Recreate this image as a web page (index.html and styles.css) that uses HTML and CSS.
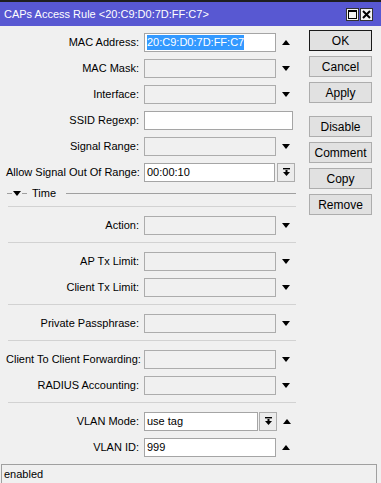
FILE: index.html
```html
<!DOCTYPE html>
<html>
<head>
	<meta charset="UTF-8">
	<title>CAPs Access Rule</title>
	<link rel="stylesheet" href="styles.css">
</head>
<body>
	<div class="window">
		<div class="titlebar">
			<span class="title">CAPs Access Rule &lt;20:C9:D0:7D:FF:C7&gt;</span>
			<span class="tbtn"><svg width="11" height="11" viewBox="0 0 11 11"><rect x="1.5" y="1.5" width="8" height="8" fill="none" stroke="#000" stroke-width="1"/><rect x="1.5" y="1.5" width="8" height="1.5" fill="#000"/></svg></span>
			<span class="tbtn"><svg width="11" height="11" viewBox="0 0 11 11"><path d="M2 2 L9 9 M9 2 L2 9" stroke="#000" stroke-width="2"/></svg></span>
		</div>
		<div class="content">
			<div class="form">
				<div class="row">
					<span class="lbl">MAC Address:</span>
					<span class="field edit"><span class="sel">20:C9:D0:7D:FF:C7</span></span>
					<span class="slot"><span class="tri-up"></span></span>
				</div>
				<div class="row">
					<span class="lbl">MAC Mask:</span>
					<span class="field"></span>
					<span class="slot"><span class="tri-down"></span></span>
				</div>
				<div class="row">
					<span class="lbl">Interface:</span>
					<span class="field"></span>
					<span class="slot"><span class="tri-down"></span></span>
				</div>
				<div class="row">
					<span class="lbl">SSID Regexp:</span>
					<span class="field edit wide"></span>
				</div>
				<div class="row">
					<span class="lbl">Signal Range:</span>
					<span class="field"></span>
					<span class="slot"><span class="tri-down"></span></span>
				</div>
				<div class="row">
					<span class="lbl">Allow Signal Out Of Range:</span>
					<span class="field edit mid">00:00:10</span>
					<span class="dbtn"><svg width="7" height="8" viewBox="0 0 7 8"><rect x="0" y="0" width="7" height="1.4" fill="#000"/><rect x="2.5" y="2" width="2" height="2" fill="#000"/><path d="M0 4 L7 4 L3.5 8 Z" fill="#000"/></svg></span>
				</div>

				<div class="section">
					<span class="dash"></span><span class="tri-down small"></span><span class="dash"></span>
					<span class="sec-title">Time</span>
					<span class="sec-line"></span>
				</div>
				<div class="sep"></div>

				<div class="row">
					<span class="lbl">Action:</span>
					<span class="field"></span>
					<span class="slot"><span class="tri-down"></span></span>
				</div>
				<div class="sep"></div>

				<div class="row">
					<span class="lbl">AP Tx Limit:</span>
					<span class="field"></span>
					<span class="slot"><span class="tri-down"></span></span>
				</div>
				<div class="row">
					<span class="lbl">Client Tx Limit:</span>
					<span class="field"></span>
					<span class="slot"><span class="tri-down"></span></span>
				</div>
				<div class="sep"></div>

				<div class="row">
					<span class="lbl">Private Passphrase:</span>
					<span class="field"></span>
					<span class="slot"><span class="tri-down"></span></span>
				</div>
				<div class="sep"></div>

				<div class="row">
					<span class="lbl">Client To Client Forwarding:</span>
					<span class="field"></span>
					<span class="slot"><span class="tri-down"></span></span>
				</div>
				<div class="row">
					<span class="lbl">RADIUS Accounting:</span>
					<span class="field"></span>
					<span class="slot"><span class="tri-down"></span></span>
				</div>
				<div class="sep"></div>

				<div class="row">
					<span class="lbl">VLAN Mode:</span>
					<span class="field edit short">use tag</span>
					<span class="dbtn tight"><svg width="7" height="8" viewBox="0 0 7 8"><rect x="0" y="0" width="7" height="1.4" fill="#000"/><rect x="2.5" y="2" width="2" height="2" fill="#000"/><path d="M0 4 L7 4 L3.5 8 Z" fill="#000"/></svg></span>
					<span class="slot"><span class="tri-up"></span></span>
				</div>
				<div class="row">
					<span class="lbl">VLAN ID:</span>
					<span class="field edit">999</span>
					<span class="slot"><span class="tri-up"></span></span>
				</div>
			</div>

			<div class="actions">
				<span class="btn default">OK</span>
				<span class="btn">Cancel</span>
				<span class="btn">Apply</span>
				<span class="btn gap">Disable</span>
				<span class="btn">Comment</span>
				<span class="btn">Copy</span>
				<span class="btn">Remove</span>
			</div>
		</div>
		<div class="status">enabled</div>
	</div>
</body>
</html>
```

FILE: styles.css
```css
body {
	margin: 0;
	background: #f0f0f0;
	font-family: "Liberation Sans", Arial, sans-serif;
	font-size: 11px;
	color: #000;
}
.window {
	width: 381px;
	height: 483px;
	overflow: hidden;
	display: flex;
	flex-direction: column;
}
.titlebar {
	height: 25px;
	border-top: 2px solid #1e1e1e;
	background: #5858d2;
	display: flex;
	align-items: center;
	padding: 0 8px 0 4px;
	gap: 1px;
}
.title {
	flex: 1;
	color: #fff;
	font-size: 11px;
}
.tbtn {
	width: 11px;
	height: 11px;
	border: 1px solid #333;
	background: #f4f4f4;
	display: flex;
}
.content {
	display: flex;
}
.form {
	width: 300px;
	padding-top: 3px;
}
.row {
	height: 26px;
	display: flex;
	align-items: center;
}
.lbl {
	width: 133px;
	padding-left: 6px;
	padding-right: 5px;
	text-align: right;
	white-space: nowrap;
}
.field {
	box-sizing: border-box;
	width: 132px;
	height: 19px;
	border: 1px solid #acacac;
	background: #f0f0f0;
	display: flex;
	align-items: center;
	padding-left: 2px;
	white-space: nowrap;
}
.field.edit {
	background: #fff;
	border-color: #a5a5a5;
}
.field.wide {
	width: 149px;
}
.field.mid {
	width: 131px;
}
.field.short {
	width: 114px;
}
.sel {
	background: #3399ff;
	color: #fff;
	line-height: 15px;
}
.slot {
	width: 20px;
	display: flex;
	justify-content: center;
}
.tri-down {
	width: 0;
	height: 0;
	border-left: 4px solid transparent;
	border-right: 4px solid transparent;
	border-top: 5px solid #000;
}
.tri-up {
	width: 0;
	height: 0;
	border-left: 4px solid transparent;
	border-right: 4px solid transparent;
	border-bottom: 5px solid #000;
}
.tri-down.small {
	margin: 0 1px;
}
.dbtn {
	box-sizing: border-box;
	width: 18px;
	height: 19px;
	margin-left: 2px;
	border: 1px solid #adadad;
	background: #ececec;
	display: flex;
	align-items: center;
	justify-content: center;
}
.dbtn.tight {
	margin-left: 1px;
}
.section {
	height: 16px;
	display: flex;
	align-items: center;
	padding-left: 7px;
}
.dash {
	width: 5px;
	height: 1px;
	background: #a0a0a0;
}
.sec-title {
	margin-left: 5px;
	margin-right: 10px;
}
.sec-line {
	flex: 1;
	height: 1px;
	background: #a0a0a0;
	margin-right: 4px;
}
.sep {
	height: 1px;
	background: #d2d2d2;
	margin: 4px 4px 5px 8px;
}
.section + .sep {
	margin-top: 5px;
}
.actions {
	padding-top: 4px;
	padding-left: 9px;
	display: flex;
	flex-direction: column;
	gap: 5px;
}
.btn {
	box-sizing: border-box;
	width: 63px;
	height: 21px;
	border: 1px solid #adadad;
	background: #e1e1e1;
	display: flex;
	align-items: center;
	justify-content: center;
	font-size: 12px;
}
.btn.default {
	border-color: #1a1a1a;
}
.btn.gap {
	margin-top: 8px;
}
.status {
	box-sizing: border-box;
	margin: 4px 0 0 1px;
	width: 376px;
	flex: 1;
	border: 1px solid #a0a0a0;
	border-bottom: none;
	padding: 3px 2px;
	font-size: 11px;
}
```
